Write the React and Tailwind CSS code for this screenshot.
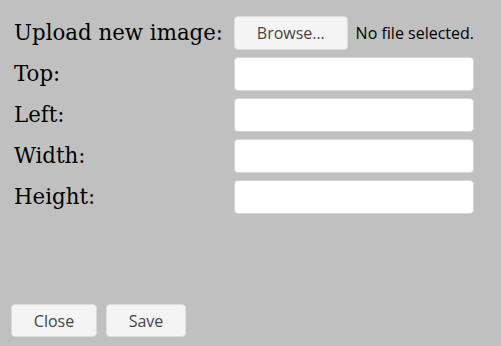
import React from "react";

const fields = ["Top:", "Left:", "Width:", "Height:"];

const App = () => {
  return (
    <div className="h-[346px] w-[501px] bg-[#c0c0c0] flex flex-col">
      {/* Form rows */}
      <div className="grid grid-cols-[220px_240px] gap-y-[7px] pt-4 pl-[14px]">
        <label className="h-[34px] flex items-center text-[21.33px] text-black font-['DejaVu_Serif',serif]">
          Upload new image:
        </label>
        <div className="h-[34px] flex items-center">
          <button className="h-[34px] w-[114px] rounded bg-[#f4f4f4] border border-[#dcdcdc] text-[16px] text-[#444] font-['Open_Sans',sans-serif]">
            Browse…
          </button>
          <span className="ml-2 text-[16px] text-black font-['Open_Sans',sans-serif] whitespace-nowrap">
            No file selected.
          </span>
        </div>
        {fields.map((f) => (
          <React.Fragment key={f}>
            <label className="h-[34px] flex items-center text-[21.33px] text-black font-['DejaVu_Serif',serif]">
              {f}
            </label>
            <input
              type="text"
              className="h-[34px] w-[240px] rounded bg-white border border-[#d6d6d6] outline-none"
            />
          </React.Fragment>
        ))}
      </div>

      {/* Footer buttons */}
      <div className="mt-auto flex gap-[9px] pl-[11px] pb-[9px]">
        <button className="h-[33px] w-[86px] rounded bg-[#f4f4f4] border border-[#dcdcdc] text-[16px] text-[#444] font-['Open_Sans',sans-serif]">
          Close
        </button>
        <button className="h-[33px] w-[80px] rounded bg-[#f4f4f4] border border-[#dcdcdc] text-[16px] text-[#444] font-['Open_Sans',sans-serif]">
          Save
        </button>
      </div>
    </div>
  );
};

export default App;
